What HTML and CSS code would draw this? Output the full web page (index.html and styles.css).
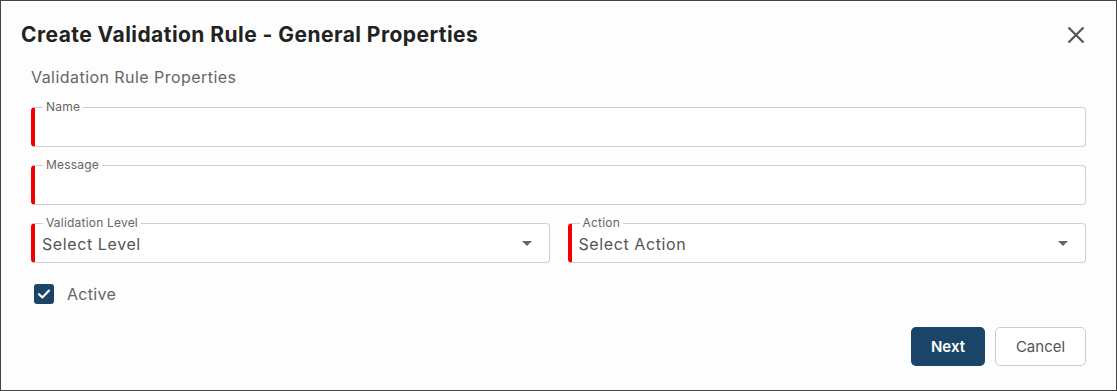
FILE: index.html
```html
<!DOCTYPE html>
<html lang="en">
<head>
    <meta charset="UTF-8">
    <title>Create Validation Rule</title>
    <link rel="stylesheet" href="styles.css">
</head>
<body>
    <div class="dialog">
        <!-- Header -->
        <div class="dialog-header">
            <h1 class="dialog-title">Create Validation Rule - General Properties</h1>
            <button class="close-btn" aria-label="Close">
                <svg width="18" height="18" viewBox="0 0 18 18">
                    <path d="M1.5 1.5 L16.5 16.5 M16.5 1.5 L1.5 16.5" stroke="#555" stroke-width="2.2" fill="none"/>
                </svg>
            </button>
        </div>

        <!-- Form -->
        <div class="dialog-body">
            <div class="section-title">Validation Rule Properties</div>

            <div class="fields">
                <div class="field required">
                    <span class="field-label">Name</span>
                    <input class="field-input" type="text">
                </div>
                <div class="field required">
                    <span class="field-label">Message</span>
                    <input class="field-input" type="text">
                </div>
                <div class="field-row">
                    <div class="field required">
                        <span class="field-label">Validation Level</span>
                        <div class="select-value">Select Level</div>
                        <span class="select-arrow"></span>
                    </div>
                    <div class="field required">
                        <span class="field-label">Action</span>
                        <div class="select-value">Select Action</div>
                        <span class="select-arrow"></span>
                    </div>
                </div>
            </div>

            <label class="check-row">
                <span class="checkbox">
                    <svg width="20" height="20" viewBox="0 0 20 20">
                        <path d="M5 10.2 L8.4 13.4 L15 6.6" stroke="#fff" stroke-width="2.2" fill="none" stroke-linecap="round" stroke-linejoin="round"/>
                    </svg>
                </span>
                <span class="check-text">Active</span>
            </label>

            <div class="actions">
                <button class="btn btn-primary">Next</button>
                <button class="btn btn-secondary">Cancel</button>
            </div>
        </div>
    </div>
</body>
</html>
```

FILE: styles.css
```css
/* General */
body {
    margin: 0;
    font-family: 'Inter', 'Liberation Sans', sans-serif;
    background-color: #fdfdfd;
}

.dialog {
    width: 1117px;
    height: 391px;
    box-sizing: border-box;
    border: 1px solid #444;
    background-color: #fdfdfd;
}

/* Header */
.dialog-header {
    display: flex;
    justify-content: space-between;
    align-items: center;
    padding: 22px 31px 0 20px;
}

.dialog-title {
    margin: 0;
    font-size: 21px;
    line-height: 24px;
    font-weight: 700;
    color: #222;
    letter-spacing: 0.45px;
}

.close-btn {
    border: none;
    background: none;
    padding: 0;
    width: 18px;
    height: 18px;
    display: flex;
    cursor: pointer;
}

/* Body */
.dialog-body {
    padding: 20px 30px 0 30px;
}

.section-title {
    font-size: 16px;
    line-height: 20px;
    color: #666;
    letter-spacing: 0.45px;
    margin-bottom: 20px;
}

.fields {
    display: flex;
    flex-direction: column;
    gap: 18px;
}

.field-row {
    display: flex;
    gap: 18px;
}

.field-row .field {
    flex: 1;
}

.field {
    position: relative;
    height: 40px;
    box-sizing: border-box;
    border: 1px solid #cfcfcf;
    border-radius: 4px;
    background-color: #fff;
    display: flex;
    align-items: center;
}

.field.required {
    border-left: 4px solid #f00000;
}

.field-label {
    position: absolute;
    top: -8px;
    left: 8px;
    padding: 0 3px;
    font-size: 12px;
    line-height: 14px;
    color: #666;
    letter-spacing: 0.2px;
    background-color: #fdfdfd;
}

.field-input {
    border: none;
    outline: none;
    background: transparent;
    width: 100%;
    height: 100%;
    padding: 0 8px;
    font-family: inherit;
    font-size: 16px;
}

.select-value {
    flex: 1;
    padding: 1px 0 0 7px;
    font-size: 16px;
    color: #555;
    letter-spacing: 0.6px;
}

.select-arrow {
    width: 0;
    height: 0;
    border-left: 5px solid transparent;
    border-right: 5px solid transparent;
    border-top: 5px solid #666;
    margin: 0 17px 0 0;
}

/* Checkbox */
.check-row {
    display: flex;
    align-items: center;
    gap: 13px;
    margin: 21px 0 0 3px;
    cursor: pointer;
}

.checkbox {
    width: 20px;
    height: 20px;
    border-radius: 3px;
    background-color: #1a4568;
    display: flex;
}

.check-text {
    font-size: 16px;
    color: #666;
    letter-spacing: 0.3px;
}

/* Buttons */
.actions {
    display: flex;
    justify-content: flex-end;
    gap: 10px;
    margin-top: 23px;
}

.btn {
    height: 39px;
    border-radius: 5px;
    font-family: inherit;
    font-size: 15px;
    cursor: pointer;
}

.btn-primary {
    width: 74px;
    border: none;
    background-color: #1a4568;
    color: #fff;
    font-weight: 600;
}

.btn-secondary {
    width: 91px;
    border: 1px solid #ccc;
    background-color: #fff;
    color: #555;
}
```
